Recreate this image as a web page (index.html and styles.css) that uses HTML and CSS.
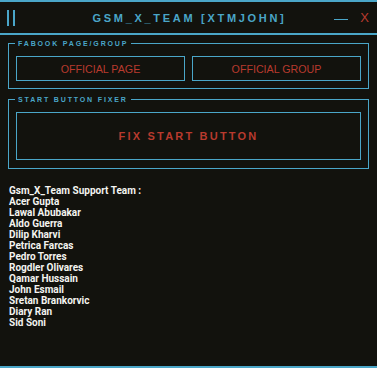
FILE: index.html
```html
<!DOCTYPE html>
<html>
<head>
<meta charset="utf-8">
<link rel="stylesheet" href="styles.css">
</head>
<body>
<div class="window">
  <div class="titlebar">
    <div class="tb-left"><span class="bar"></span><span class="bar"></span></div>
    <div class="title">GSM_X_TEAM [XTMJOHN]</div>
    <div class="tb-right"><span class="min"></span><span class="close">X</span></div>
  </div>
  <div class="content">
    <fieldset class="group">
      <legend>FABOOK PAGE/GROUP</legend>
      <div class="row">
        <button class="btn">OFFICIAL PAGE</button>
        <button class="btn">OFFICIAL GROUP</button>
      </div>
    </fieldset>
    <fieldset class="group group2">
      <legend>START BUTTON FIXER</legend>
      <button class="btn big">FIX START BUTTON</button>
    </fieldset>
    <div class="team">
      <div>Gsm_X_Team Support Team :</div>
      <div>Acer Gupta</div>
      <div>Lawal Abubakar</div>
      <div>Aldo Guerra</div>
      <div>Dilip Kharvi</div>
      <div>Petrica Farcas</div>
      <div>Pedro Torres</div>
      <div>Rogdler Olivares</div>
      <div>Qamar Hussain</div>
      <div>John Esmail</div>
      <div>Sretan Brankorvic</div>
      <div>Diary Ran</div>
      <div>Sid Soni</div>
    </div>
  </div>
</div>
</body>
</html>
```
FILE: styles.css
```css
html, body { margin: 0; padding: 0; background: #12120d; }
.window {
  width: 377px; height: 368px; box-sizing: border-box;
  background: #12120d;
  border-top: 2px solid #4aa6c8;
  border-bottom: 2px solid #4aa6c8;
  display: flex; flex-direction: column;
  font-family: "Liberation Sans", Arial, sans-serif;
}
.titlebar {
  height: 31px;
  border-bottom: 2px solid #4aa6c8;
  display: grid; grid-template-columns: 1fr auto 1fr; align-items: center;
}
.tb-left { display: flex; gap: 4px; padding-left: 7px; }
.bar { width: 2px; height: 16px; background: #4aa6c8; }
.title {
  color: #4aa6c8; font-weight: bold; font-size: 11px; letter-spacing: 2.7px;
  padding-left: 2px;
}
.tb-right { display: flex; justify-content: flex-end; align-items: center; padding-right: 8px; gap: 12px; }
.min { width: 14px; height: 1px; background: #4aa6c8; margin-top: 3px; }
.close { color: #b83a2e; font-size: 13px; line-height: 13px; }
.content { padding: 4px 8px 0 8px; display: flex; flex-direction: column; }
.group {
  margin: 0; border: 1px solid #4aa6c8; padding: 8px 7px 7px 7px; min-width: 0;
}
.group2 { margin-top: 6px; padding-bottom: 8px; }
legend {
  color: #4aa6c8; font-size: 7px; line-height: 9px; font-weight: bold;
  letter-spacing: 1.85px; padding: 0 3px; margin-left: -1px;
}
.row { display: flex; gap: 7px; }
.btn {
  flex: 1; height: 25px; margin: 0; padding: 0;
  background: transparent; border: 1px solid #4aa6c8;
  color: #b83a2e; font-family: "Liberation Sans", Arial, sans-serif; font-size: 10.7px;
}
.btn.big { width: 100%; height: 48px; font-size: 11px; font-weight: bold; letter-spacing: 2.2px; }
.team {
  margin-top: 16px; padding-left: 1px;
  color: #f4f4f0; font-family: Roboto, "Liberation Sans", sans-serif;
  font-weight: bold; font-size: 10px; line-height: 11px;
}
```
